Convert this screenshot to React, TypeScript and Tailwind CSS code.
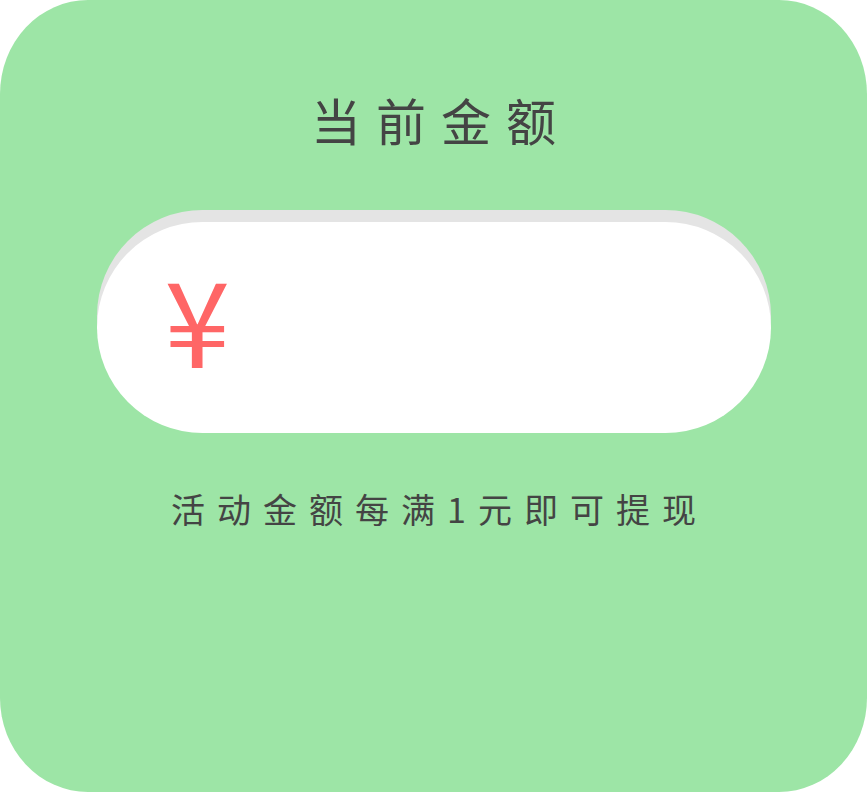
import React from 'react';

const FONT = "font-['Noto_Sans_CJK_SC',_'Noto_Sans',_sans-serif]";

export default function App() {
    return (
        <div className={`w-[867px] h-[792px] bg-white ${FONT}`}>
            {/* Card */}
            <div className="w-full h-full rounded-[88px/94px] bg-[#9de5a6] flex flex-col items-center">
                {/* Title */}
                <div className="pt-[94px] pl-[15px] text-[50px] leading-none tracking-[15px] text-[#444444] font-normal">
                    当前金额
                </div>

                {/* Amount pill */}
                <div className="mt-[78px] w-[674px] h-[211px] rounded-full bg-white shadow-[0_-12px_0_#e4e4e4] flex items-center pl-[68px]">
                    <span className="text-[118px] leading-none text-[#ff6666] font-normal -mt-[22px]">¥</span>
                </div>

                {/* Hint */}
                <div className="mt-[59px] pl-[12px] text-[34px] leading-none tracking-[12px] text-[#444444] font-normal">
                    活动金额每满1元即可提现
                </div>
            </div>
        </div>
    );
}
